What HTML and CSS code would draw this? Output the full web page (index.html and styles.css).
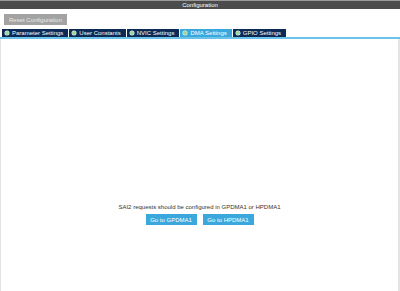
FILE: index.html
```html
<!DOCTYPE html>
<html>
<head>
<meta charset="utf-8">
<link rel="stylesheet" href="styles.css">
</head>
<body>
<div class="titlebar">Configuration</div>
<div class="toolbar">
  <button class="reset">Reset Configuration</button>
</div>
<div class="tabs">
  <div class="tab"><span class="dot"></span>Parameter Settings</div>
  <div class="tab"><span class="dot"></span>User Constants</div>
  <div class="tab"><span class="dot"></span>NVIC Settings</div>
  <div class="tab active"><span class="dot"></span>DMA Settings</div>
  <div class="tab"><span class="dot"></span>GPIO Settings</div>
</div>
<div class="tabline"></div>
<div class="content">
  <div class="msg">SAI2 requests should be configured in GPDMA1 or HPDMA1</div>
  <div class="btns">
    <button class="go">Go to GPDMA1</button>
    <button class="go">Go to HPDMA1</button>
  </div>
</div>
</body>
</html>
```
FILE: styles.css
```css
html, body {
  margin: 0;
  padding: 0;
  width: 400px;
  height: 291px;
  overflow: hidden;
  background: #ffffff;
  font-family: "Liberation Sans", Arial, sans-serif;
}
body {
  display: flex;
  flex-direction: column;
}
.titlebar {
  height: 8px;
  background: #4b4b4b;
  border-top: 1px solid #9a9a9a;
  color: #ffffff;
  font-size: 6px;
  line-height: 8px;
  text-align: center;
}
.toolbar {
  padding: 5px 4px 4px 4px;
  display: flex;
}
.reset {
  width: 63px;
  height: 11px;
  padding: 0;
  border: none;
  background: #a3a3a3;
  color: #e9e9e9;
  font-family: inherit;
  font-size: 6px;
}
.tabs {
  display: flex;
  gap: 1px;
  padding-left: 2px;
}
.tab {
  height: 8px;
  line-height: 8px;
  background: #0b2a55;
  color: #ffffff;
  font-size: 6px;
  padding: 0 5px 0 3px;
  display: flex;
  align-items: center;
  gap: 3px;
}
.tab.active {
  background: #3ba8dd;
}
.dot {
  width: 4px;
  height: 4px;
  border-radius: 50%;
  background: #9bd69b;
  box-shadow: 0 0 0 0.5px #e8f5e8;
}
.tabline {
  height: 2px;
  background: #6cc3ea;
}
.content {
  flex: 1;
  border-left: 1px solid #e4e4e4;
  border-right: 2px solid #e4e4e4;
  display: flex;
  flex-direction: column;
  align-items: center;
  padding-top: 164px;
}
.msg {
  font-size: 6px;
  color: #333333;
  line-height: 8px;
}
.btns {
  display: flex;
  gap: 6px;
  margin-top: 3px;
}
.go {
  width: 51px;
  height: 11px;
  padding: 0;
  border: none;
  background: #3ba8dd;
  color: #ffffff;
  font-family: inherit;
  font-size: 6px;
}
```
